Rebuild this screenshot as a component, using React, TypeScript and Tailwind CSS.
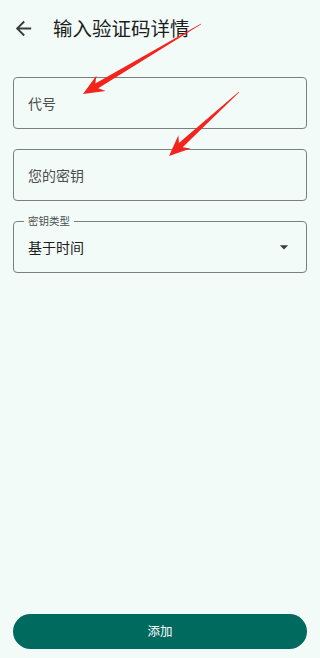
import React from 'react';

const font = { fontFamily: '"Noto Sans CJK SC", "Noto Sans", sans-serif' };

function arrowPoints(tx: number, ty: number, sx: number, sy: number) {
  const dx = sx - tx;
  const dy = sy - ty;
  const len = Math.hypot(dx, dy);
  const ux = dx / len;
  const uy = dy / len;
  const nx = -uy;
  const ny = ux;
  const headLen = 21;
  const notch = 16;
  const headW = 9;
  const shaftW = 2.8;
  const tailW = 0.3;
  const hx = tx + ux * headLen;
  const hy = ty + uy * headLen;
  const bx = tx + ux * notch;
  const by = ty + uy * notch;
  const pts = [
    [tx, ty],
    [hx + nx * headW, hy + ny * headW],
    [bx + nx * shaftW, by + ny * shaftW],
    [sx + nx * tailW, sy + ny * tailW],
    [sx - nx * tailW, sy - ny * tailW],
    [bx - nx * shaftW, by - ny * shaftW],
    [hx - nx * headW, hy - ny * headW],
  ];
  return pts.map((p) => p.map((v) => v.toFixed(1)).join(',')).join(' ');
}

function TextBox({ placeholder }: { placeholder: string }) {
  return (
    <div className="h-[52px] rounded-[4px] border border-[#7b807e] flex items-center pl-[14px]">
      <span className="text-[14px] text-[#4a4f4d]">{placeholder}</span>
    </div>
  );
}

export default function App() {
  return (
    <div className="relative w-[320px] h-[658px] bg-[#f3fbf8] flex flex-col overflow-hidden" style={font}>
      <div className="h-14 flex items-center">
        <svg className="ml-[12px] w-[23px] h-[23px]" viewBox="0 0 24 24" fill="#3a3d3c">
          <path d="M20 11H7.83l5.59-5.59L12 4l-8 8 8 8 1.41-1.41L7.83 13H20v-2z" />
        </svg>
        <h1 className="ml-[18px] text-[19.5px] text-[#1b1d1c] leading-none">输入验证码详情</h1>
      </div>

      <div className="mx-[13px] mt-[21px] flex flex-col gap-[20px]">
        <TextBox placeholder="代号" />
        <TextBox placeholder="您的密钥" />
        <div className="relative h-[52px] rounded-[4px] border border-[#7b807e] flex items-center pl-[14px] pr-[12px]">
          <span className="absolute -top-[8px] left-[10px] px-[4px] bg-[#f3fbf8] text-[10.5px] leading-[14px] text-[#4a4f4d]">
            密钥类型
          </span>
          <span className="flex-1 text-[14px] text-[#1b1d1c]">基于时间</span>
          <svg className="w-5 h-5" viewBox="0 0 24 24" fill="#3a3d3c">
            <path d="M7 10l5 5 5-5z" />
          </svg>
        </div>
      </div>

      <div className="flex-1" />

      <button className="mx-[13px] mb-[9px] h-[35px] rounded-full bg-[#006a5f] text-white text-[12.5px]">
        添加
      </button>

      <svg className="absolute inset-0 pointer-events-none" width="320" height="658" viewBox="0 0 320 658">
        <polygon points={arrowPoints(83, 94, 201, 24)} fill="#f2241c" />
        <polygon points={arrowPoints(169, 156, 239, 92)} fill="#f2241c" />
      </svg>
    </div>
  );
}
